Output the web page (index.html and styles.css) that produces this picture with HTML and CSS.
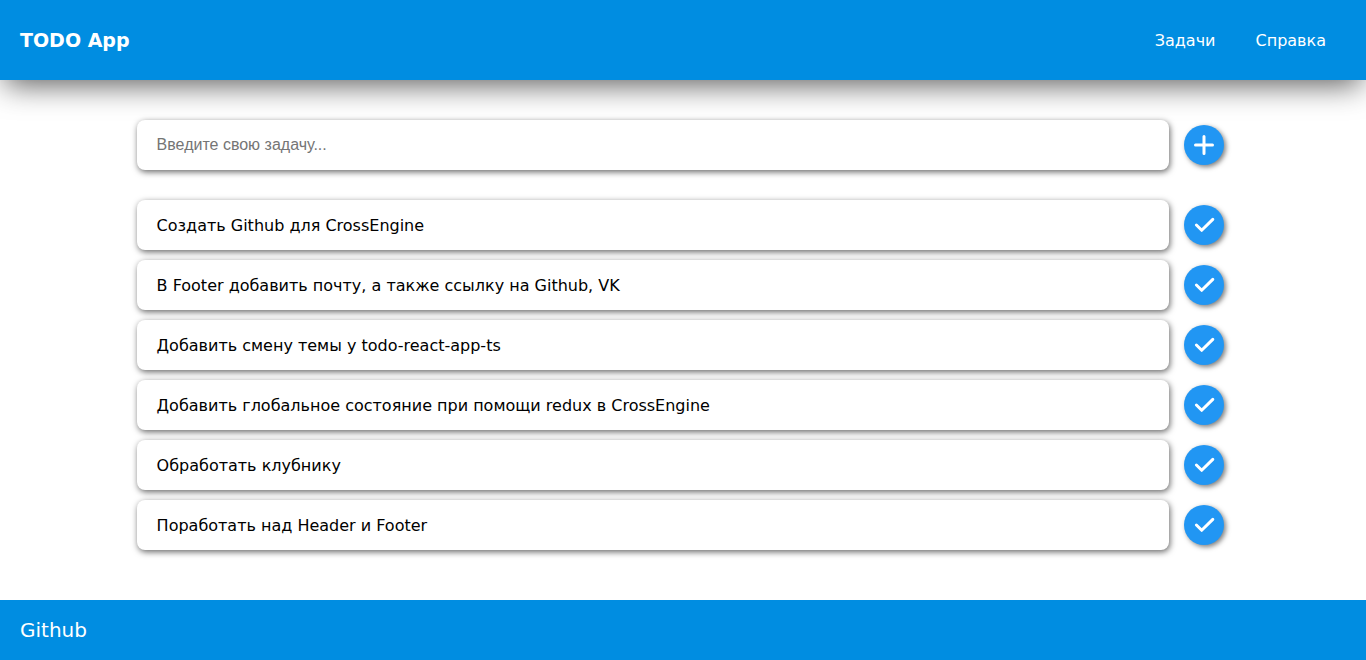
FILE: index.html
```html
<!DOCTYPE html>
<html lang="ru">
<head>
<meta charset="utf-8">
<title>TODO App</title>
<link rel="stylesheet" href="styles.css">
</head>
<body>
<header class="header">
<h1 class="logo">TODO App</h1>
<nav class="nav"><a href="#tasks">Задачи</a><a href="#help">Справка</a></nav>
</header>
<main class="main">
<form class="row form">
<input class="card field" type="text" aria-label="Новая задача" placeholder="Введите свою задачу...">
<button class="round" type="button" aria-label="Добавить"><svg class="icon" viewBox="0 0 24 24"><path d="M3.5 12h17M12 3.5v17"/></svg></button>
</form>
<ul class="list">
<li class="row"><p class="card task">Создать Github для CrossEngine</p><button class="round" type="button" aria-label="Выполнено"><svg class="icon" viewBox="0 0 24 24"><path d="M4.4 12l5.3 5.3L20.8 6.4"/></svg></button></li>
<li class="row"><p class="card task">В Footer добавить почту, а также ссылку на Github, VK</p><button class="round" type="button" aria-label="Выполнено"><svg class="icon" viewBox="0 0 24 24"><path d="M4.4 12l5.3 5.3L20.8 6.4"/></svg></button></li>
<li class="row"><p class="card task">Добавить смену темы у todo-react-app-ts</p><button class="round" type="button" aria-label="Выполнено"><svg class="icon" viewBox="0 0 24 24"><path d="M4.4 12l5.3 5.3L20.8 6.4"/></svg></button></li>
<li class="row"><p class="card task">Добавить глобальное состояние при помощи redux в CrossEngine</p><button class="round" type="button" aria-label="Выполнено"><svg class="icon" viewBox="0 0 24 24"><path d="M4.4 12l5.3 5.3L20.8 6.4"/></svg></button></li>
<li class="row"><p class="card task">Обработать клубнику</p><button class="round" type="button" aria-label="Выполнено"><svg class="icon" viewBox="0 0 24 24"><path d="M4.4 12l5.3 5.3L20.8 6.4"/></svg></button></li>
<li class="row"><p class="card task">Поработать над Header и Footer</p><button class="round" type="button" aria-label="Выполнено"><svg class="icon" viewBox="0 0 24 24"><path d="M4.4 12l5.3 5.3L20.8 6.4"/></svg></button></li>
</ul>
</main>
<footer class="footer"><a href="#github">Github</a></footer>
</body>
</html>
```
FILE: styles.css
```css
* { box-sizing: border-box; margin: 0; padding: 0; }
body { min-height: 100vh; display: flex; flex-direction: column; background: #fff; color: #000; font: 16px/20px "DejaVu Sans", sans-serif; }
a { color: inherit; text-decoration: none; }
.header { display: flex; align-items: center; justify-content: space-between; min-height: 80px; padding: 0 40px 0 20px; background: #008de1; color: #fff; box-shadow: 0 10px 30px -5px rgba(0, 0, 0, .64); }
.logo { font: bold 19px/24px "DejaVu Sans", sans-serif; }
.nav { display: flex; gap: 40px; padding-top: 2px; }
.main { flex: 1; width: 80%; margin: 0 auto; padding: 40px 0 50px; }
.row { display: flex; align-items: center; gap: 15px; padding-right: 5px; }
.form { margin-bottom: 30px; }
.list { display: grid; gap: 10px; list-style: none; }
.card { flex: 1; min-width: 0; min-height: 50px; padding: 15px 20px; border: 0; border-radius: 8px; background: #fff; box-shadow: 1px 2px 6px rgba(0, 0, 0, .6); }
.task { padding: 16px 20px 14px; }
.field { font: 16px/20px "Liberation Sans", Arial, sans-serif; }
.field::placeholder { color: #757575; }
.round { display: grid; place-items: center; width: 40px; height: 40px; border: 0; border-radius: 50%; background: #2196f3; box-shadow: 2px 2px 5px rgba(0, 0, 0, .5); }
.icon { width: 24px; height: 24px; fill: none; stroke: #fff; stroke-width: 3; stroke-linecap: round; stroke-linejoin: round; }
.footer { display: flex; align-items: center; min-height: 60px; padding: 0 20px; background: #008de1; color: #fff; font-size: 20px; line-height: 24px; }
```
